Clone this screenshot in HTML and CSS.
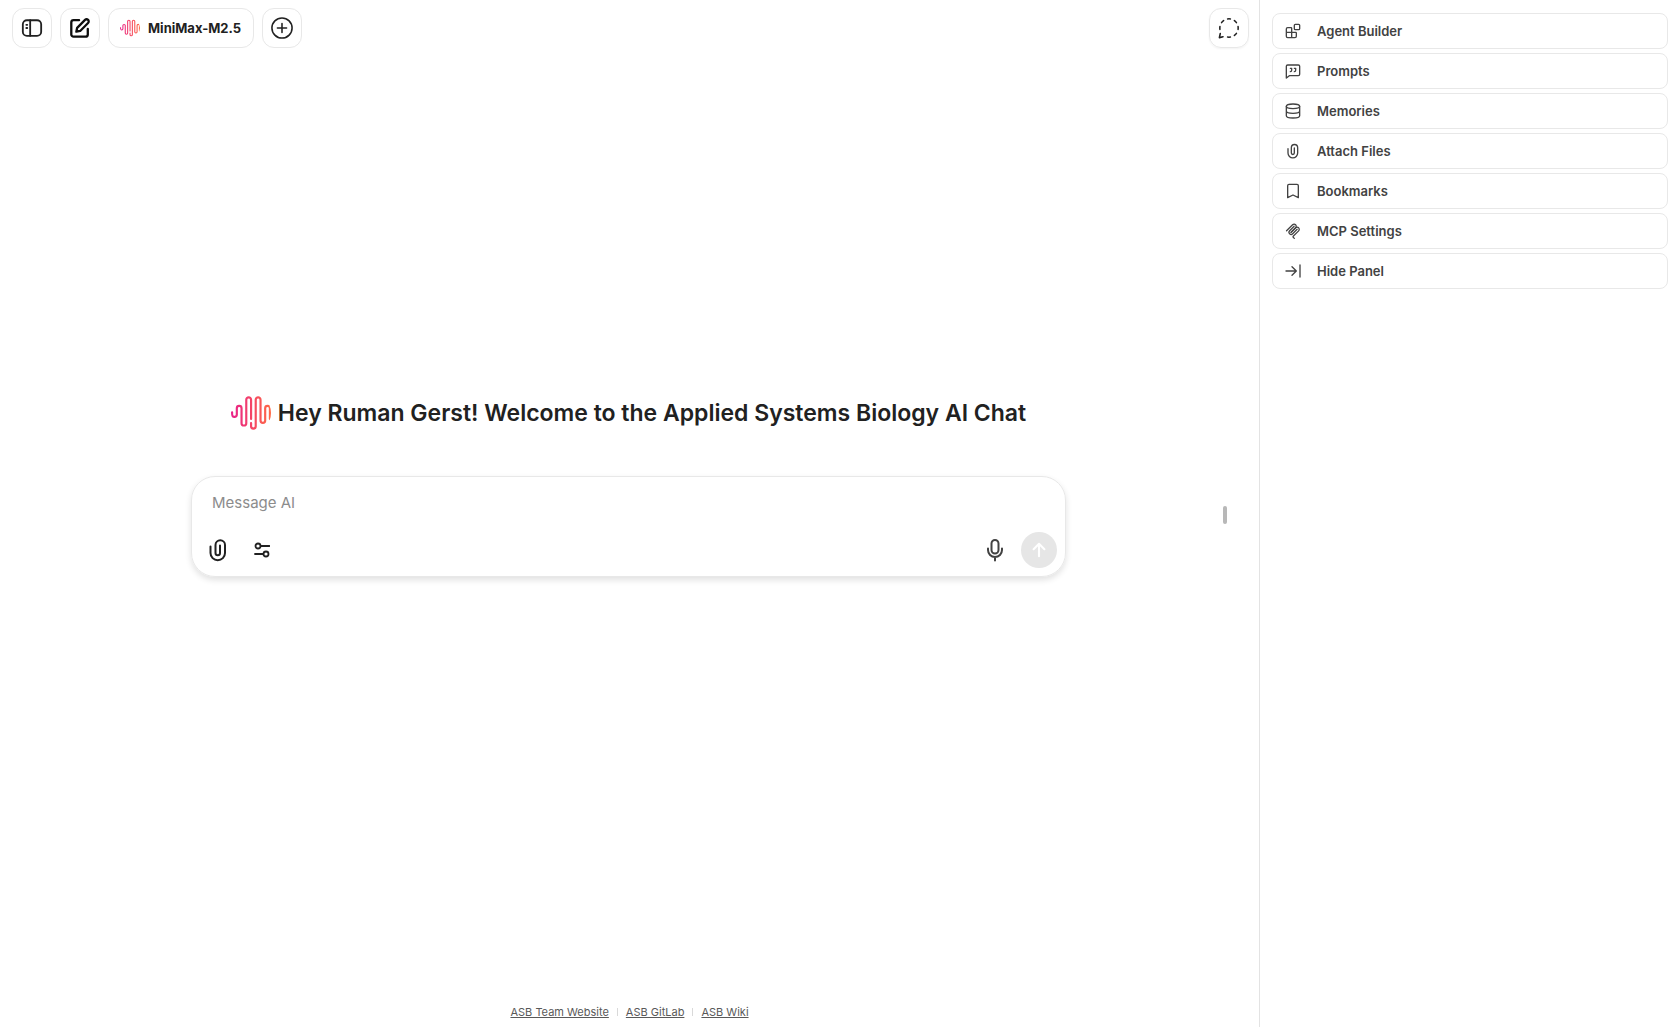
FILE: index.html
```html
<!DOCTYPE html>
<html lang="en">
<head>
  <meta charset="UTF-8">
  <meta name="viewport" content="width=device-width, initial-scale=1.0">
  <title>Applied Systems Biology AI Chat</title>
  <link rel="stylesheet" href="styles.css">
</head>
<body>
  <!-- Shared shapes -->
  <svg class="defs" aria-hidden="true">
    <defs>
      <linearGradient id="wave" x1="0" x2="1" y1="0" y2="0">
        <stop offset="0" stop-color="#e8208a"/>
        <stop offset="1" stop-color="#ff6a45"/>
      </linearGradient>
      <symbol id="logo" viewBox="0 0 24 24">
        <path fill="url(#wave)" d="M16.278 2c1.156 0 2.093.927 2.093 2.07v12.501a.74.74 0 00.744.709.74.74 0 00.743-.709V9.099a2.06 2.06 0 012.071-2.049A2.06 2.06 0 0124 9.1v6.561a.649.649 0 01-.652.645.649.649 0 01-.653-.645V9.1a.762.762 0 00-.766-.758.762.762 0 00-.766.758v7.472a2.037 2.037 0 01-2.048 2.026 2.037 2.037 0 01-2.048-2.026v-12.5a.785.785 0 00-.788-.753.785.785 0 00-.789.752l-.001 15.904A2.037 2.037 0 0113.441 22a2.037 2.037 0 01-2.048-2.026V18.04c0-.356.292-.645.652-.645.36 0 .652.289.652.645v1.934c0 .263.142.506.372.638.23.131.514.131.744 0a.734.734 0 00.372-.638V4.07c0-1.143.937-2.07 2.093-2.07zm-5.674 0c1.156 0 2.093.927 2.093 2.07v11.523a.648.648 0 01-.652.645.648.648 0 01-.652-.645V4.07a.785.785 0 00-.789-.78.785.785 0 00-.789.78v14.013a2.06 2.06 0 01-2.07 2.048 2.06 2.06 0 01-2.071-2.048V9.1a.762.762 0 00-.766-.758.762.762 0 00-.766.758v3.8a2.06 2.06 0 01-2.071 2.049A2.06 2.06 0 010 12.9v-1.378c0-.357.292-.646.652-.646.36 0 .653.29.653.646V12.9c0 .418.343.757.766.757s.766-.339.766-.757V9.099a2.06 2.06 0 012.07-2.048 2.06 2.06 0 012.071 2.048v8.984c0 .419.343.758.767.758.423 0 .766-.339.766-.758V4.07c0-1.143.937-2.07 2.093-2.07z"/>
      </symbol>
      <symbol id="clip" viewBox="0 0 24 24">
        <path d="M4.500 8.500v6.500a7.250 7.250 0 0 0 14.500 0V7a4.750 4.750 0 0 0-9.500 0v8a2.250 2.250 0 0 0 4.500 0V7.500"/>
      </symbol>
    </defs>
  </svg>

  <div class="app">
    <main class="chat">
      <header class="topbar">
        <button class="tool-btn" aria-label="Open sidebar">
          <svg class="icon icon-lg" viewBox="0 0 24 24"><rect x="2" y="3.500" width="20" height="17" rx="4.500"/><path d="M10 3.500v17M5.800 8.500h1M5.800 12h1"/></svg>
        </button>
        <button class="tool-btn dark" aria-label="New chat">
          <svg class="icon icon-lg bold" viewBox="0 0 24 24"><path d="M11 3.500H5A2.500 2.500 0 0 0 2.500 6v13A2.500 2.500 0 0 0 5 21.500h13a2.500 2.500 0 0 0 2.500-2.500v-6"/><path d="M17.500 3.200a2.300 2.300 0 0 1 3.300 3.300l-8.600 8.700-4.200.8.900-4.200z"/></svg>
        </button>
        <button class="tool-btn model">
          <svg class="logo-sm" aria-hidden="true"><use href="#logo"/></svg>
          <span>MiniMax-M2.5</span>
        </button>
        <button class="tool-btn" aria-label="Add conversation">
          <svg class="icon icon-lg thin" viewBox="0 0 24 24"><circle cx="12" cy="12" r="11"/><path d="M12 7v10M7 12h10"/></svg>
        </button>
        <button class="tool-btn temporary" aria-label="Temporary chat">
          <svg class="icon icon-lg thin" viewBox="0 0 24 24"><path d="M10.500 2.100a10 10 0 0 1 3 0M13.500 21.900a10 10 0 0 1-3 0M17.900 3.900a10 10 0 0 1 2.200 2.200M2.100 13.500a10 10 0 0 1 0-3M20.100 17.900a10 10 0 0 1-2.200 2.200M21.900 10.500a10 10 0 0 1 0 3M3.900 6.100a10 10 0 0 1 2.200-2.200M2.500 18L1.500 22.500l4-1"/></svg>
        </button>
      </header>

      <section class="landing">
        <h1 class="greeting">
          <svg class="logo-lg" aria-hidden="true"><use href="#logo"/></svg>
          <span>Hey Ruman Gerst! Welcome to the Applied Systems Biology AI Chat</span>
        </h1>
        <form class="composer">
          <textarea class="message" rows="1" placeholder="Message AI" aria-label="Message input"></textarea>
          <div class="actions">
            <button type="button" class="action" aria-label="Attach file options">
              <svg class="icon icon-xl"><use href="#clip"/></svg>
            </button>
            <button type="button" class="action" aria-label="Tools options">
              <svg class="icon icon-sm tools" viewBox="0 0 16 16"><circle cx="4" cy="4" r="2.500"/><path d="M7 4h8.500M1 12h8"/><circle cx="12" cy="12" r="2.500"/></svg>
            </button>
            <button type="button" class="action mic" aria-label="Use microphone">
              <svg class="icon icon-xl" viewBox="0 0 24 24"><rect x="8.500" y="2" width="7" height="13.500" rx="3.500"/><path d="M5 10.500v1.500a7 7 0 0 0 14 0v-1.500M12 19.500v3"/></svg>
            </button>
            <button type="submit" class="send" aria-label="Send message" disabled>
              <svg class="icon icon-md bold" viewBox="0 0 24 24"><path d="M12 19.500v-15M5.500 11L12 4.500l6.500 6.500"/></svg>
            </button>
          </div>
        </form>
      </section>

      <footer class="links">
        <a href="#website">ASB Team Website</a>
        <span class="divider"></span>
        <a href="#gitlab">ASB GitLab</a>
        <span class="divider"></span>
        <a href="#wiki">ASB Wiki</a>
      </footer>
      <div class="panel-handle"></div>
    </main>

    <nav class="panel" aria-label="Controls">
      <button class="panel-btn">
        <svg class="icon icon-sm" viewBox="0 0 24 24"><rect x="14" y="2" width="8" height="8" rx="1.500"/><path d="M10 22V8a1 1 0 0 0-1-1H4a2 2 0 0 0-2 2v11a2 2 0 0 0 2 2h11a2 2 0 0 0 2-2v-5a1 1 0 0 0-1-1H2"/></svg>
        Agent Builder
      </button>
      <button class="panel-btn">
        <svg class="icon icon-sm" viewBox="0 0 24 24"><path d="M22 17a2 2 0 0 1-2 2H6.500L2 22.500V5a2 2 0 0 1 2-2h16a2 2 0 0 1 2 2zM14 13a2 2 0 0 0 2-2V8h-2M8 13a2 2 0 0 0 2-2V8H8"/></svg>
        Prompts
      </button>
      <button class="panel-btn">
        <svg class="icon icon-sm" viewBox="0 0 24 24"><ellipse cx="12" cy="5" rx="10" ry="3.500"/><path d="M2 5v14c0 2 4.500 3.500 10 3.500S22 21 22 19V5M2 12c0 2 4.500 3.500 10 3.500S22 14 22 12"/></svg>
        Memories
      </button>
      <button class="panel-btn">
        <svg class="icon icon-sm"><use href="#clip"/></svg>
        Attach Files
      </button>
      <button class="panel-btn">
        <svg class="icon icon-sm" viewBox="0 0 24 24"><path d="M20 22l-8-4-8 4V4a2 2 0 0 1 2-2h12a2 2 0 0 1 2 2z"/></svg>
        Bookmarks
      </button>
      <button class="panel-btn">
        <svg class="icon icon-sm mcp" viewBox="10 10 175 180"><path d="M25 97.853l67.882-67.882c9.373-9.373 24.569-9.373 33.941 0 9.373 9.372 9.373 24.568 0 33.941l-51.265 51.265"/><path d="M76.265 114.470l50.558-50.558c9.373-9.373 24.569-9.373 33.942 0l.353.353c9.373 9.373 9.373 24.569 0 33.941L99.725 159.600c-3.124 3.124-3.124 8.189 0 11.313l12.606 12.607"/><path d="M109.853 46.941L59.648 97.146c-9.372 9.372-9.372 24.568 0 33.941 9.373 9.372 24.569 9.372 33.941 0l50.205-50.205"/></svg>
        MCP Settings
      </button>
      <button class="panel-btn">
        <svg class="icon icon-sm" viewBox="0 0 24 24"><path d="M1.500 12H17M10.500 5.500L17 12l-6.500 6.500M22.500 3v18"/></svg>
        Hide Panel
      </button>
    </nav>
  </div>
</body>
</html>
```
FILE: styles.css
```css
* {
  box-sizing: border-box;
}

body {
  margin: 0;
  font-family: Inter, "Liberation Sans", sans-serif;
  font-size: 13px;
  color: #212121;
  background-color: #fff;
}

button {
  padding: 0;
  border: none;
  background: none;
  font: inherit;
  color: inherit;
  cursor: pointer;
}

.defs {
  position: absolute;
  width: 0;
  height: 0;
}

.app {
  display: grid;
  grid-template-columns: 1fr calc(25% + 1px);
  min-height: 100vh;
}

.chat {
  position: relative;
  display: flex;
  flex-direction: column;
}

/* Icons */
.icon {
  display: block;
  flex: none;
  fill: none;
  stroke: currentColor;
  stroke-width: 2;
  stroke-linecap: round;
  stroke-linejoin: round;
}

.icon-sm {
  width: 16px;
  height: 16px;
}

.icon-md {
  width: 20px;
  height: 20px;
}

.icon-lg {
  width: 22px;
  height: 22px;
}

.icon-xl {
  width: 24px;
  height: 24px;
}

.icon.bold {
  stroke-width: 2.5;
}

.icon.thin {
  stroke-width: 1.7;
}

.icon.tools {
  stroke-width: 1.8;
}

.icon.mcp {
  stroke-width: 14;
}

/* Top bar */
.topbar {
  display: flex;
  gap: 8px;
  padding: 8px 10px 8px 12px;
}

.tool-btn {
  display: flex;
  align-items: center;
  justify-content: center;
  width: 40px;
  height: 40px;
  border: 1px solid #e8e8e8;
  border-radius: 12px;
}

.tool-btn.dark {
  color: #0d0d0d;
}

.tool-btn.model {
  gap: 8px;
  width: auto;
  padding: 0 12px 0 11px;
  font-weight: 700;
}

.tool-btn.temporary {
  margin-left: auto;
  box-shadow: 0 1px 2px rgba(0, 0, 0, 0.05);
}

.logo-sm {
  width: 20px;
  height: 20px;
  border-radius: 50%;
}

/* Landing */
.landing {
  flex: 1;
  display: flex;
  flex-direction: column;
  align-items: center;
  justify-content: center;
  padding: 0 18px 84px 16px;
}

.greeting {
  display: flex;
  align-items: center;
  gap: 7px;
  margin: 0 0 43px;
  font-size: 23px;
  font-weight: 600;
  line-height: 32px;
}

.logo-lg {
  flex: none;
  width: 40px;
  height: 40px;
  border-radius: 50%;
}

.composer {
  width: 100%;
  max-width: 875px;
  padding: 8px;
  border: 1px solid #e8e8e8;
  border-radius: 24px;
  box-shadow: 0 3px 6px rgba(0, 0, 0, 0.12);
}

.message {
  display: block;
  width: 100%;
  height: 47px;
  padding: 6px 12px;
  border: none;
  outline: none;
  resize: none;
  background: none;
  font: inherit;
  font-size: 15px;
  line-height: 24px;
}

.message::placeholder {
  color: #8c8c8c;
}

.actions {
  display: flex;
  align-items: center;
  gap: 8px;
}

.action,
.send {
  display: flex;
  align-items: center;
  justify-content: center;
  width: 36px;
  height: 36px;
  border-radius: 50%;
}

.action.mic {
  margin-left: auto;
  color: #424242;
}

.send {
  background-color: #e6e6e6;
  color: #fff;
}

/* Footer */
.links {
  display: flex;
  align-items: center;
  justify-content: center;
  gap: 8px;
  height: 30px;
  font-size: 11px;
}

.links a {
  color: #595959;
}

.divider {
  width: 1px;
  height: 8px;
  background-color: #d9d9d9;
}

.panel-handle {
  position: absolute;
  top: 50%;
  right: 32px;
  width: 4px;
  height: 18px;
  margin-top: -8px;
  border-radius: 2px;
  background-color: #b8b8b8;
}

/* Side panel */
.panel {
  display: flex;
  flex-direction: column;
  gap: 4px;
  padding: 13px 12px;
  border-left: 1px solid #e3e3e3;
}

.panel-btn {
  display: flex;
  align-items: center;
  gap: 16px;
  height: 36px;
  padding: 0 12px;
  border: 1px solid #e8e8e8;
  border-radius: 8px;
  font-weight: 600;
  color: #424242;
}
```
